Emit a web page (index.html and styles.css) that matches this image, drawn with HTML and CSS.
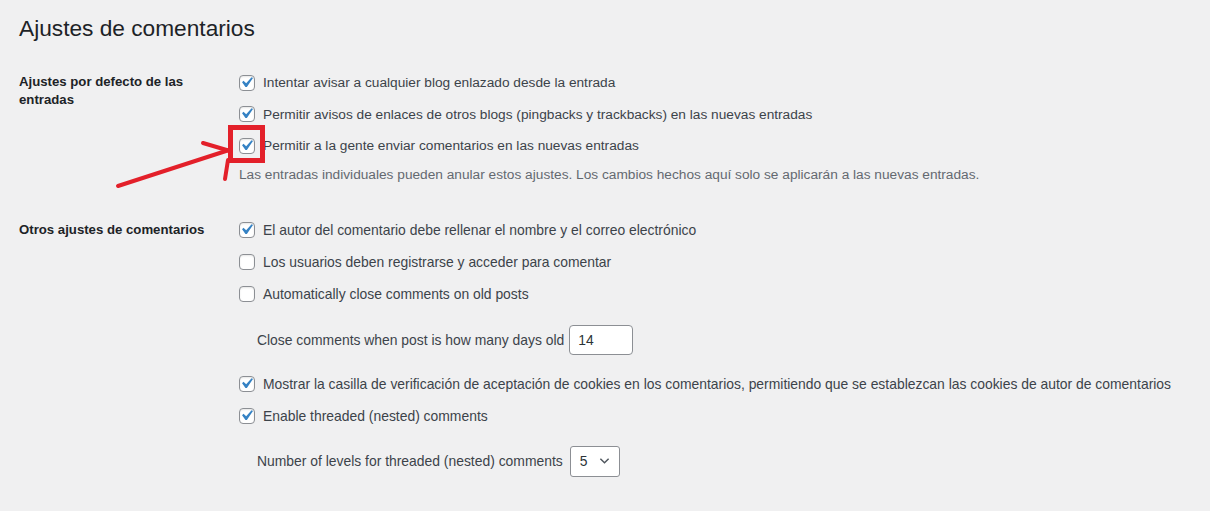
FILE: index.html
```html
<!DOCTYPE html>
<html lang="es">
<head>
<meta charset="utf-8">
<title>Ajustes de comentarios</title>
<link rel="stylesheet" href="styles.css">
</head>
<body>
<div class="wrap">
  <h1 class="title">Ajustes de comentarios</h1>

  <div class="row sec1">
    <div class="th">Ajustes por defecto de las entradas</div>
    <div class="td">
      <label class="cb"><span class="box"><svg viewBox="0 0 20 20"><path d="M14.83 4.89l1.34.94-5.81 8.38H9.02L5.78 9.67l1.34-1.25 2.57 2.4z"/></svg></span>Intentar avisar a cualquier blog enlazado desde la entrada</label>
      <label class="cb"><span class="box"><svg viewBox="0 0 20 20"><path d="M14.83 4.89l1.34.94-5.81 8.38H9.02L5.78 9.67l1.34-1.25 2.57 2.4z"/></svg></span>Permitir avisos de enlaces de otros blogs (pingbacks y trackbacks) en las nuevas entradas</label>
      <label class="cb"><span class="box"><svg viewBox="0 0 20 20"><path d="M14.83 4.89l1.34.94-5.81 8.38H9.02L5.78 9.67l1.34-1.25 2.57 2.4z"/></svg></span>Permitir a la gente enviar comentarios en las nuevas entradas</label>
      <p class="desc">Las entradas individuales pueden anular estos ajustes. Los cambios hechos aquí solo se aplicarán a las nuevas entradas.</p>
    </div>
  </div>

  <div class="row sec2">
    <div class="th">Otros ajustes de comentarios</div>
    <div class="td">
      <label class="cb cb2"><span class="box"><svg viewBox="0 0 20 20"><path d="M14.83 4.89l1.34.94-5.81 8.38H9.02L5.78 9.67l1.34-1.25 2.57 2.4z"/></svg></span>El autor del comentario debe rellenar el nombre y el correo electrónico</label>
      <label class="cb cb2"><span class="box"></span>Los usuarios deben registrarse y acceder para comentar</label>
      <label class="cb cb2"><span class="box"></span>Automatically close comments on old posts</label>
      <div class="sub sub1">Close comments when post is how many days old <span class="input">14</span></div>
      <label class="cb cb2 after-sub"><span class="box"><svg viewBox="0 0 20 20"><path d="M14.83 4.89l1.34.94-5.81 8.38H9.02L5.78 9.67l1.34-1.25 2.57 2.4z"/></svg></span>Mostrar la casilla de verificación de aceptación de cookies en los comentarios, permitiendo que se establezcan las cookies de autor de comentarios</label>
      <label class="cb cb2"><span class="box"><svg viewBox="0 0 20 20"><path d="M14.83 4.89l1.34.94-5.81 8.38H9.02L5.78 9.67l1.34-1.25 2.57 2.4z"/></svg></span>Enable threaded (nested) comments</label>
      <div class="sub sub2">Number of levels for threaded (nested) comments <span class="select">5<svg class="chev" viewBox="0 0 12 8"><path d="M1.5 1.5 L6 6 L10.5 1.5"/></svg></span></div>
    </div>
  </div>

  <svg class="annot" width="1210" height="511" viewBox="0 0 1210 511">
    <rect x="230.5" y="127.5" width="32" height="33" fill="none" stroke="#e3202a" stroke-width="5"/>
    <path d="M118 186 L229 150" stroke="#e3202a" stroke-width="4" stroke-linecap="round" fill="none"/>
    <path d="M203 143 L230 151" stroke="#e3202a" stroke-width="4" stroke-linecap="round" fill="none"/>
    <path d="M228 160 L225 179" stroke="#e3202a" stroke-width="4" stroke-linecap="round" fill="none"/>
  </svg>
</div>
</body>
</html>
```

FILE: styles.css
```css
html, body {
  margin: 0;
  padding: 0;
}
body {
  background: #f0f0f1;
  font-family: "Liberation Sans", Arial, sans-serif;
  font-size: 13.7px;
  color: #3c434a;
}
.wrap {
  position: relative;
  height: 511px;
  box-sizing: border-box;
  padding: 13px 0 0 19px;
  overflow: hidden;
}
.title {
  margin: 0 0 24px;
  font-size: 22.7px;
  font-weight: 400;
  line-height: 30px;
  color: #1d2327;
}
.row {
  display: flex;
  align-items: flex-start;
}
.th {
  flex: none;
  width: 200px;
  padding-right: 20px;
  padding-top: 6px;
  font-size: 13.2px;
  font-weight: bold;
  line-height: 18px;
  color: #1d2327;
}
.sec2 {
  margin-top: 29px;
}
.sec2 .th {
  padding-top: 7px;
}
.sec2 .td {
  font-size: 13.9px;
}
.td {
  display: flex;
  flex-direction: column;
}
.cb {
  display: flex;
  align-items: center;
  gap: 8px;
  height: 31.5px;
  white-space: nowrap;
}
.cb2 {
  height: 32px;
}
.box {
  flex: none;
  width: 16px;
  height: 16px;
  box-sizing: border-box;
  border: 1px solid #8c8f94;
  border-radius: 4px;
  background: #fff;
  position: relative;
  box-shadow: inset 0 1px 2px rgba(0,0,0,.1);
}
.box svg {
  position: absolute;
  left: -4px;
  top: -4px;
  width: 21px;
  height: 21px;
  fill: #3582c4;
}
.desc {
  margin: 3px 0 0;
  line-height: 20px;
  color: #646970;
}
.sub {
  display: flex;
  align-items: center;
  gap: 5px;
  padding-left: 18px;
  white-space: nowrap;
}
.sub1 {
  margin-top: 15px;
}
.after-sub {
  margin-top: 13px;
}
.sub2 {
  margin-top: 14px;
  gap: 7px;
}
.input {
  display: flex;
  align-items: center;
  box-sizing: border-box;
  width: 64px;
  height: 30px;
  padding: 0 8px;
  border: 1px solid #8c8f94;
  border-radius: 4px;
  background: #fff;
  color: #2c3338;
}
.select {
  display: flex;
  align-items: center;
  justify-content: space-between;
  box-sizing: border-box;
  width: 50px;
  height: 31px;
  padding: 0 9px 0 9px;
  border: 1px solid #8c8f94;
  border-radius: 3px;
  background: #fff;
  color: #2c3338;
}
.chev {
  width: 11px;
  height: 8px;
  fill: none;
  stroke: #50575e;
  stroke-width: 1.6;
}
.annot {
  position: absolute;
  left: 0;
  top: 0;
  pointer-events: none;
}
```
